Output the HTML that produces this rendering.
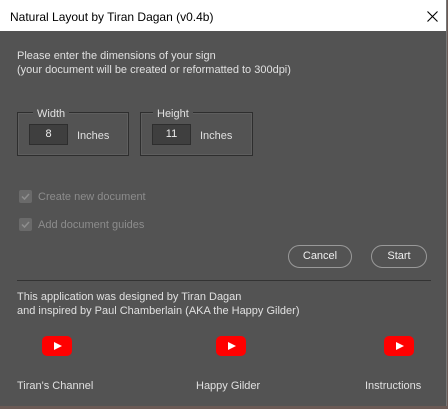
<!DOCTYPE html>
<html><head><style>
body{margin:0;width:448px;height:409px;overflow:hidden;background:#6b5a55;font-family:"Liberation Sans",sans-serif;font-size:11px;}
#win{position:absolute;left:0;top:0;width:446px;height:406px;background:#535353;border-right:1px solid #777;}
#title{position:absolute;left:0;top:0;width:446px;height:31px;background:#fff;color:#000;font-size:12px;}
.a{position:absolute;white-space:nowrap;color:#e0e0e0;}
.g{position:absolute;border:1px solid #2e2e2e;box-shadow:inset 0 0 0 1px #5e5e5e;}
.inp{position:absolute;background:#3f3f3f;border:1px solid #2e2e2e;color:#eee;text-align:center;line-height:19px;}
.cb{position:absolute;width:13px;height:13px;background:#6a6a6a;border-radius:2px;}
.btn{position:absolute;border:1px solid #999;border-radius:12px;color:#eee;text-align:center;line-height:21px;}
.yt{position:absolute;width:30px;height:20px;background:#f00;border-radius:5px;}
.yt:after{content:"";position:absolute;left:12px;top:6px;border-left:8px solid #fff;border-top:4px solid transparent;border-bottom:4px solid transparent;}
</style></head><body>
<div id="win">
<div id="title"><span style="position:absolute;left:10px;top:10px">Natural Layout by Tiran Dagan (v0.4b)</span>
<svg style="position:absolute;left:427px;top:11px" width="11" height="11"><path d="M0.5 0.5L10.5 10.5M10.5 0.5L0.5 10.5" stroke="#000" stroke-width="1.1"/></svg></div>
<div class="a" style="left:17px;top:50px">Please enter the dimensions of your sign</div>
<div class="a" style="left:17px;top:64px">(your document will be created or reformatted to 300dpi)</div>
<div class="g" style="left:17px;top:112px;width:110px;height:42px"></div>
<div class="a" style="left:33px;top:108px;background:#535353;padding:0 4px">Width</div>
<div class="inp" style="left:29px;top:124px;width:37px;height:19px">8</div>
<div class="a" style="left:77px;top:130px">Inches</div>
<div class="g" style="left:140px;top:112px;width:111px;height:42px"></div>
<div class="a" style="left:153px;top:108px;background:#535353;padding:0 4px">Height</div>
<div class="inp" style="left:152px;top:124px;width:37px;height:19px">11</div>
<div class="a" style="left:200px;top:130px">Inches</div>
<div class="cb" style="left:19px;top:190px"><svg width="13" height="13"><path d="M3 6.5L5.5 9L10 4" stroke="#8e8e8e" stroke-width="1.5" fill="none"/></svg></div>
<div class="a" style="left:38px;top:191px;color:#8c8c8c">Create new document</div>
<div class="cb" style="left:19px;top:218px"><svg width="13" height="13"><path d="M3 6.5L5.5 9L10 4" stroke="#8e8e8e" stroke-width="1.5" fill="none"/></svg></div>
<div class="a" style="left:38px;top:219px;color:#8c8c8c">Add document guides</div>
<div class="btn" style="left:288px;top:245px;width:62px;height:21px">Cancel</div>
<div class="btn" style="left:371px;top:245px;width:54px;height:21px">Start</div>
<div style="position:absolute;left:17px;top:280px;width:414px;height:1px;background:#333"></div>
<div class="a" style="left:17px;top:291px">This application was designed by Tiran Dagan</div>
<div class="a" style="left:17px;top:305px">and inspired by Paul Chamberlain (AKA the Happy Gilder)</div>
<div class="yt" style="left:42px;top:336px"></div>
<div class="yt" style="left:216px;top:336px"></div>
<div class="yt" style="left:384px;top:336px"></div>
<div class="a" style="left:17px;top:380px">Tiran's Channel</div>
<div class="a" style="left:196px;top:380px">Happy Gilder</div>
<div class="a" style="left:365px;top:380px">Instructions</div>
</div>
</body></html>
